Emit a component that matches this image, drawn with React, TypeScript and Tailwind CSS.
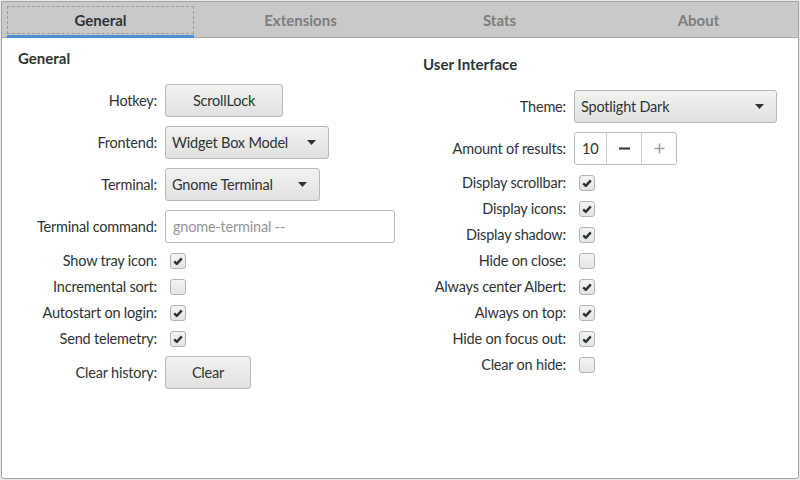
const tabs = ["General", "Extensions", "Stats", "About"];

function Tab({ label, active }: { label: string; active?: boolean }) {
  return (
    <div className="flex-1 px-[5px]">
      <div
        className={
          active
            ? "mr-[2px] h-[36px] border-b-[3px] border-[#4a90d9] pt-[4px]"
            : "h-[36px] pt-[4px]"
        }
      >
        <div
          className={
            active
              ? "flex h-[28px] items-center justify-center border border-dashed border-[#9c9c9c] text-[15px] font-bold tracking-normal text-[#2e3436]"
              : "flex h-[28px] items-center justify-center border border-transparent text-[15px] font-bold tracking-normal text-[#7d7d7d]"
          }
        >
          {label}
        </div>
      </div>
    </div>
  );
}

function Arrow() {
  return (
    <svg width="9" height="5" viewBox="0 0 9 5">
      <path d="M0 0 L9 0 L4.5 5 Z" fill="#2e3436" />
    </svg>
  );
}

function Button({ label, width }: { label: string; width: string }) {
  return (
    <div
      className={`flex h-[33px] ${width} items-center justify-center rounded-[3px] border border-[#b8b8b6] bg-linear-to-b from-[#f2f2f1] to-[#e1e1df]`}
    >
      {label}
    </div>
  );
}

function Combo({ label, width }: { label: string; width: string }) {
  return (
    <div
      className={`flex h-[33px] ${width} items-center justify-between rounded-[3px] border border-[#b8b8b6] bg-linear-to-b from-[#f2f2f1] to-[#e1e1df] pl-[6px] pr-[12px]`}
    >
      <span>{label}</span>
      <Arrow />
    </div>
  );
}

function Check({ checked }: { checked?: boolean }) {
  return (
    <div className="ml-[5px] flex h-[16px] w-[16px] items-center justify-center rounded-[3px] border border-[#b3b3b1] bg-linear-to-b from-[#f4f4f3] to-[#e4e4e2]">
      {checked && (
        <svg width="12" height="12" viewBox="0 0 12 12">
          <path
            d="M2.2 6.4 L4.8 8.9 L9.8 3.4"
            fill="none"
            stroke="#2e3436"
            strokeWidth="2.4"
            strokeLinejoin="round"
          />
        </svg>
      )}
    </div>
  );
}

function Row({
  label,
  labelWidth,
  children,
}: {
  label: string;
  labelWidth: string;
  children: React.ReactNode;
}) {
  return (
    <div className="flex items-center gap-[8px]">
      <span className={`${labelWidth} shrink-0 text-right`}>{label}</span>
      {children}
    </div>
  );
}

function CheckRow({
  label,
  labelWidth,
  checked,
}: {
  label: string;
  labelWidth: string;
  checked?: boolean;
}) {
  return (
    <div className="flex h-[17px] items-center gap-[8px]">
      <span className={`${labelWidth} shrink-0 text-right`}>{label}</span>
      <Check checked={checked} />
    </div>
  );
}

export default function App() {
  return (
    <div className="h-[480px] w-[800px] bg-[#e9e9e9] p-px font-['Lato',sans-serif] text-[14.5px] leading-[18px] tracking-[-0.2px] text-[#2e3436]">
      <div className="flex h-full flex-col overflow-hidden rounded-b-[3px] border border-[#a4a4a4] bg-white">
        <div className="flex h-[36px] border-b border-[#a4a4a4] bg-[#c9c9c9]">
          {tabs.map((t, i) => (
            <Tab key={t} label={t} active={i === 0} />
          ))}
        </div>

        <div className="flex flex-1">
          <div className="w-[405px] pl-[16px] pt-[11px]">
            <h2 className="text-[15px] font-bold tracking-normal">General</h2>
            <div className="mt-[17px] flex flex-col gap-[9px]">
              <Row label="Hotkey:" labelWidth="w-[139px]">
                <Button label="ScrollLock" width="w-[118px]" />
              </Row>
              <Row label="Frontend:" labelWidth="w-[139px]">
                <Combo label="Widget Box Model" width="w-[164px]" />
              </Row>
              <Row label="Terminal:" labelWidth="w-[139px]">
                <Combo label="Gnome Terminal" width="w-[155px]" />
              </Row>
              <Row label="Terminal command:" labelWidth="w-[139px]">
                <div className="flex h-[33px] w-[230px] items-center rounded-[3px] border border-[#bdbdbb] bg-white pl-[7px] text-[#929595]">
                  gnome-terminal --
                </div>
              </Row>
              <CheckRow label="Show tray icon:" labelWidth="w-[139px]" checked />
              <CheckRow label="Incremental sort:" labelWidth="w-[139px]" />
              <CheckRow label="Autostart on login:" labelWidth="w-[139px]" checked />
              <CheckRow label="Send telemetry:" labelWidth="w-[139px]" checked />
              <Row label="Clear history:" labelWidth="w-[139px]">
                <Button label="Clear" width="w-[86px]" />
              </Row>
            </div>
          </div>

          <div className="flex-1 pl-[16px] pt-[17px]">
            <h2 className="text-[15px] font-bold tracking-normal">User Interface</h2>
            <div className="mt-[17px] flex flex-col gap-[9px]">
              <Row label="Theme:" labelWidth="w-[143px]">
                <Combo label="Spotlight Dark" width="w-[203px]" />
              </Row>
              <Row label="Amount of results:" labelWidth="w-[143px]">
                <div className="flex h-[33px] items-stretch rounded-[3px] border border-[#bdbdbb] bg-white">
                  <div className="flex w-[31px] items-center pl-[7px]">10</div>
                  <div className="flex w-[35px] items-center justify-center border-l border-[#d0d0ce]">
                    <svg width="11" height="11" viewBox="0 0 11 11">
                      <path d="M0 5.5 H11" stroke="#2e3436" strokeWidth="2" />
                    </svg>
                  </div>
                  <div className="flex w-[35px] items-center justify-center border-l border-[#d0d0ce]">
                    <svg width="11" height="11" viewBox="0 0 11 11">
                      <path d="M0.5 5.5 H10.5 M5.5 0.5 V10.5" stroke="#9c9e9e" strokeWidth="1.5" />
                    </svg>
                  </div>
                </div>
              </Row>
              <CheckRow label="Display scrollbar:" labelWidth="w-[143px]" checked />
              <CheckRow label="Display icons:" labelWidth="w-[143px]" checked />
              <CheckRow label="Display shadow:" labelWidth="w-[143px]" checked />
              <CheckRow label="Hide on close:" labelWidth="w-[143px]" />
              <CheckRow label="Always center Albert:" labelWidth="w-[143px]" checked />
              <CheckRow label="Always on top:" labelWidth="w-[143px]" checked />
              <CheckRow label="Hide on focus out:" labelWidth="w-[143px]" checked />
              <CheckRow label="Clear on hide:" labelWidth="w-[143px]" />
            </div>
          </div>
        </div>
      </div>
    </div>
  );
}
